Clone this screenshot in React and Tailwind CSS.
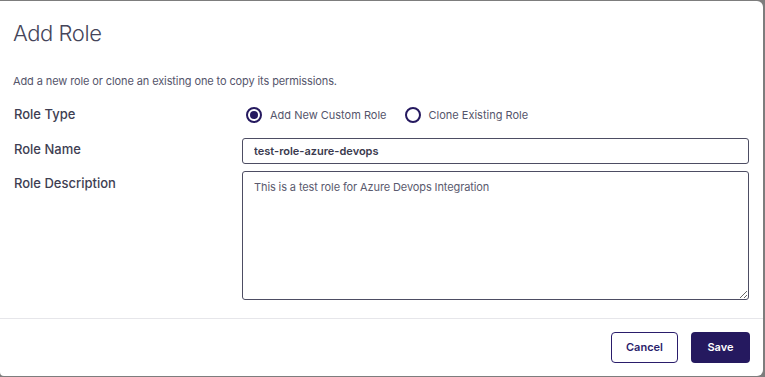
import { useState } from 'react'

const font = { fontFamily: 'Inter, "Noto Sans", sans-serif' }

function Radio({ checked, label, onClick }) {
  return (
    <button type="button" onClick={onClick} className="flex items-center gap-[8px] text-[11px] text-[#55556b]">
      <span className="flex h-[16px] w-[16px] items-center justify-center rounded-full border-2 border-[#25195f]">
        {checked && <span className="h-[8px] w-[8px] rounded-full bg-[#25195f]" />}
      </span>
      <span>{label}</span>
    </button>
  )
}

export default function App() {
  const [type, setType] = useState('new')

  return (
    <div className="h-[377px] w-[765px] bg-[#7d7d7d] pt-px" style={font}>
      <div className="flex h-[375px] w-[763px] flex-col rounded-r-[6px] rounded-bl-[4px] bg-white">
        <h1 className="pl-[13px] pt-[18px] text-[22px] font-light leading-[28px] tracking-[-0.02em] text-[#45455a]">
          Add Role
        </h1>

        <p className="mt-[26px] pl-[13px] text-[11px] leading-[16px] tracking-[-0.01em] text-[#55556b]">
          Add a new role or clone an existing one to copy its permissions.
        </p>

        <div className="mt-[13px] grid grid-cols-[228px_507px] pl-[14px]">
          <div className="pt-[3px] text-[13px] font-medium leading-[18px] text-[#3e3e52]">Role Type</div>
          <div className="flex h-[26px] items-center gap-[18px] pl-[4px]">
            <Radio checked={type === 'new'} label="Add New Custom Role" onClick={() => setType('new')} />
            <Radio checked={type === 'clone'} label="Clone Existing Role" onClick={() => setType('clone')} />
          </div>

          <div className="mt-[10px] pt-[2px] text-[13px] font-medium leading-[18px] text-[#3e3e52]">Role Name</div>
          <input
            defaultValue="test-role-azure-devops"
            className="mt-[10px] h-[26px] w-[507px] rounded-[3px] border border-[#4d4d63] px-[11px] text-[11px] font-semibold text-[#3a3a4e] outline-none"
          />

          <div className="mt-[7px] pt-[3px] text-[13px] font-medium leading-[18px] text-[#3e3e52]">Role Description</div>
          <textarea
            defaultValue="This is a test role for Azure Devops Integration"
            className="mt-[7px] h-[129px] w-[507px] resize-y rounded-[3px] border border-[#4d4d63] px-[11px] py-[7px] text-[11px] leading-[16px] tracking-[-0.01em] text-[#5a5a6e] outline-none"
          />
        </div>

        <div className="mt-auto border-t border-[#e6e6ea] pb-[13px] pt-[13px]">
          <div className="flex justify-end gap-[13px] pr-[13px]">
            <button className="h-[31px] w-[67px] rounded-[4px] border border-[#2a1d6b] text-[11px] font-semibold text-[#2a1d6b]">
              Cancel
            </button>
            <button className="h-[31px] w-[59px] rounded-[4px] bg-[#25195f] text-[11px] font-semibold text-white">
              Save
            </button>
          </div>
        </div>
      </div>
    </div>
  )
}
